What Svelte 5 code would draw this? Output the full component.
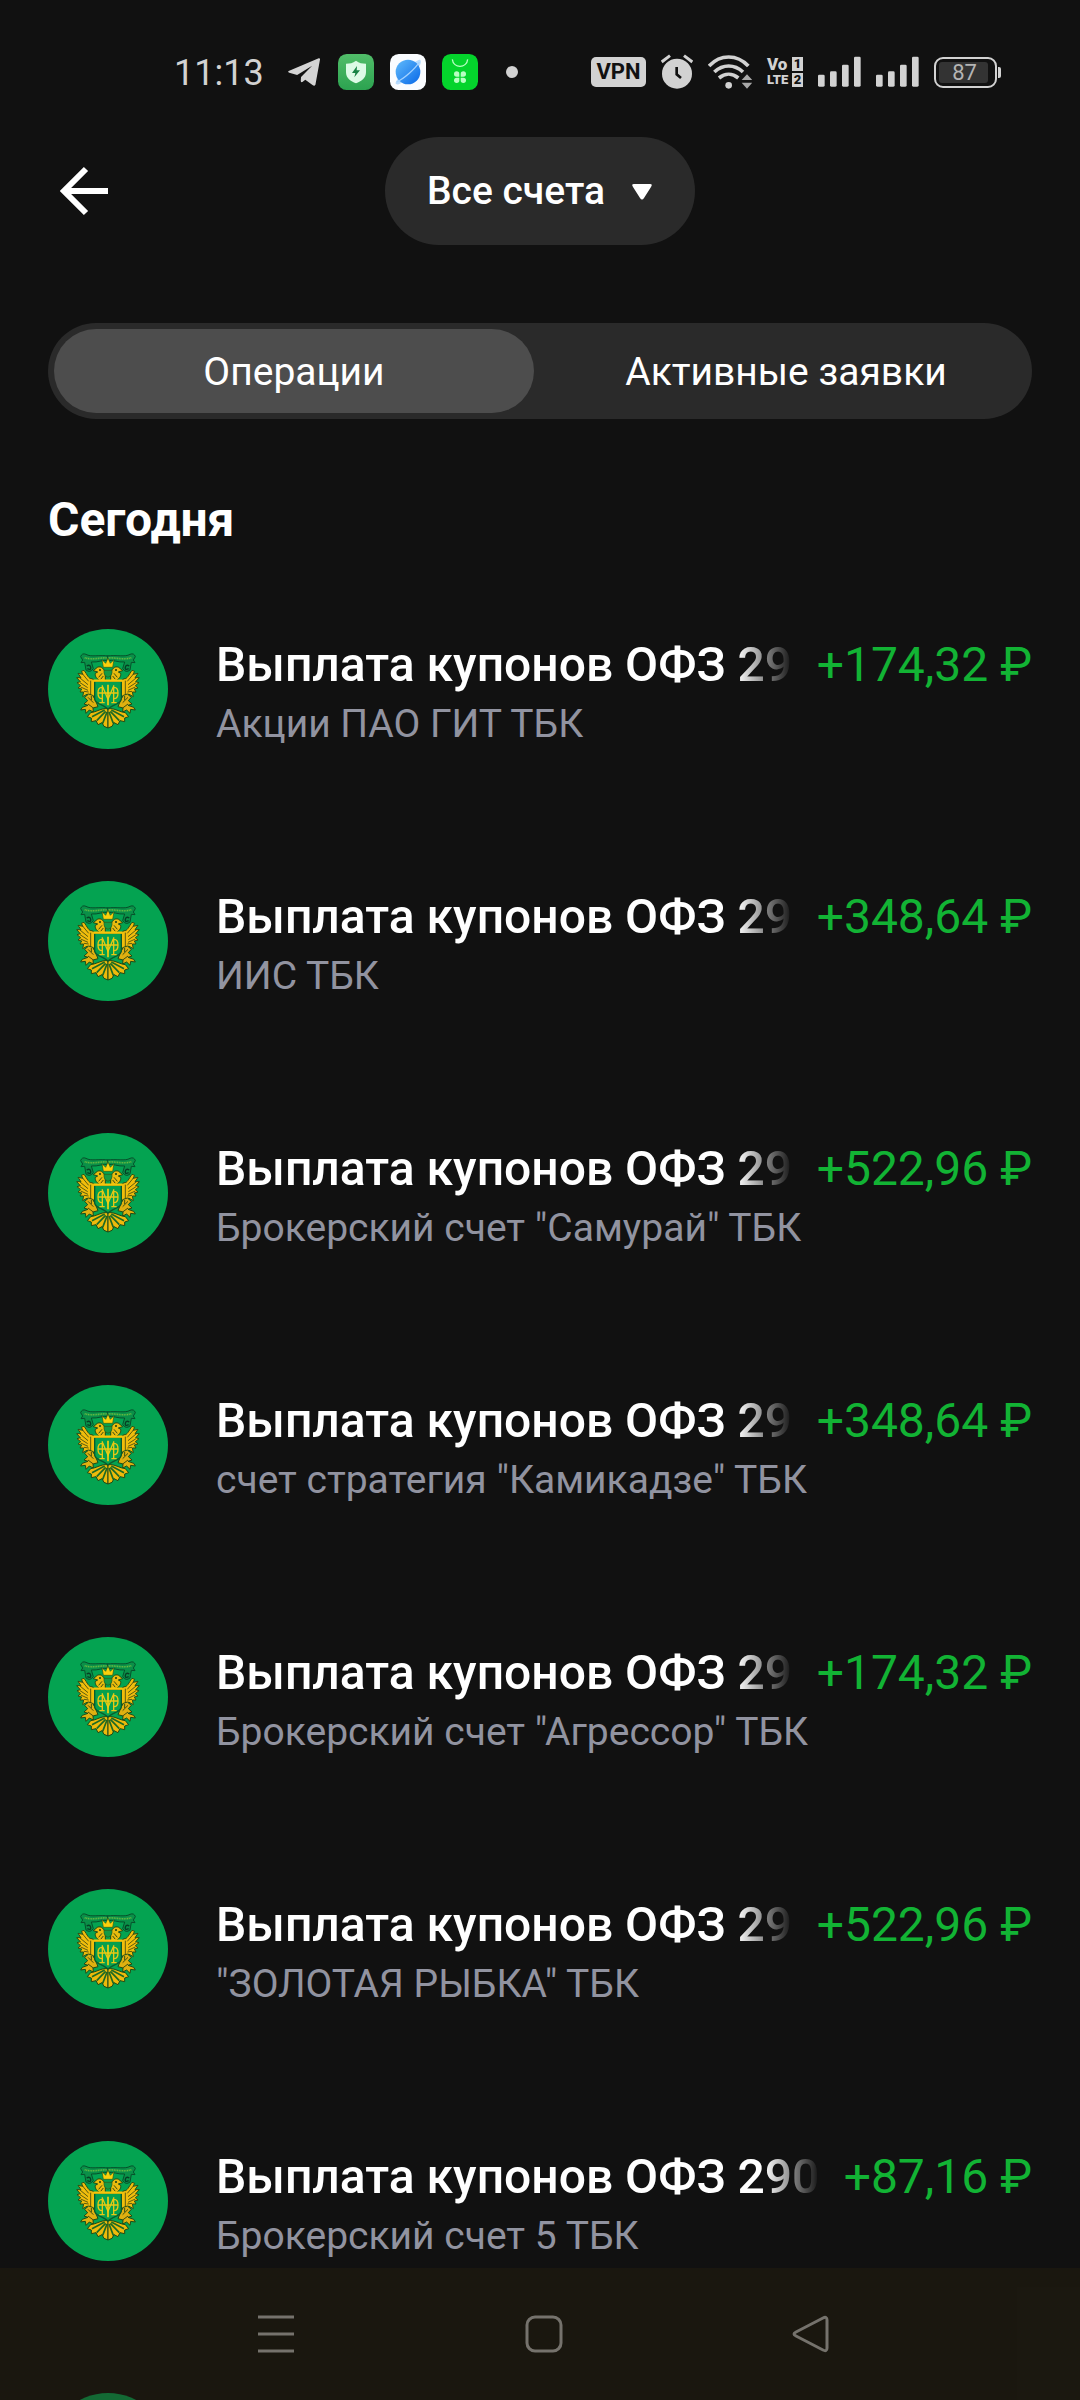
<script>
  const operations = [
    { id: 1, title: 'Выплата купонов ОФЗ 29', account: 'Акции ПАО ГИТ ТБК', amount: '+174,32 ₽' },
    { id: 2, title: 'Выплата купонов ОФЗ 29', account: 'ИИС ТБК', amount: '+348,64 ₽' },
    { id: 3, title: 'Выплата купонов ОФЗ 29', account: 'Брокерский счет "Самурай" ТБК', amount: '+522,96 ₽' },
    { id: 4, title: 'Выплата купонов ОФЗ 29', account: 'счет стратегия "Камикадзе" ТБК', amount: '+348,64 ₽' },
    { id: 5, title: 'Выплата купонов ОФЗ 29', account: 'Брокерский счет "Агрессор" ТБК', amount: '+174,32 ₽' },
    { id: 6, title: 'Выплата купонов ОФЗ 29', account: '"ЗОЛОТАЯ РЫБКА" ТБК', amount: '+522,96 ₽' },
    { id: 7, title: 'Выплата купонов ОФЗ 290', account: 'Брокерский счет 5 ТБК', amount: '+87,16 ₽' },
    { id: 8 },
  ];
  let tab = $state('ops');
</script>

{#snippet half()}
  <path d="M206 108C180 104 152 112 138 103Q126 98 122 110L128 120 123 128 134 127 138 150Q150 160 160 146L154 126C174 128 190 118 206 122Z" fill="#0a9048" stroke="#06512b" stroke-width="3" />
  <path d="M140 138Q150 132 152 142T142 146" fill="none" stroke="#053f24" stroke-width="4" />
  <path d="M134 113C158 121 180 112 204 114" fill="none" stroke="#6cbc40" stroke-width="5" stroke-dasharray="3 2" />
  <path d="M196 186V162C194 148 184 136 172 142L160 152 173 156 166 160C164 170 172 178 180 182Z" fill="#e9bb0e" stroke="#1d4a16" stroke-width="3" />
  <circle cx="180" cy="150" r="3" fill="#153c12" />
  <path d="M186 160L176 172M190 168L182 178" stroke="#3c4d10" stroke-width="3" />
  <path d="M168 184L156 176C146 178 142 164 132 151L124 154 129 163 114 160 123 173 110 173 121 185 111 188 122 197 114 204 125 207 120 216 131 216 128 230 142 222 148 232 168 226Z" fill="#f0bd0c" stroke="#2d4f14" stroke-width="3" />
  <path d="M126 160L146 184M120 174L144 194M120 188L143 203M122 201L144 211M132 214L146 216M152 182V222" stroke="#5c5c10" stroke-width="3" fill="none" />
  <path d="M166 240L158 226 146 222 134 232 143 242 132 252 144 256 127 262 122 270 136 268 138 280 148 270 160 276 159 264 174 260Z" fill="#dfb010" stroke="#1d4a16" stroke-width="3" />
  <path d="M144 232L160 248M144 252L160 264M154 228V240" stroke="#3c4d10" stroke-width="3" />
  <path d="M202 266C184 264 170 276 152 278L142 290 154 294 154 305 168 302 174 314 186 308 192 319 204 324V266Z" fill="#edba0c" stroke="#1d4a16" stroke-width="3" />
  <path d="M194 270L156 290M197 274L170 302M201 276L188 310" stroke="#1d6a24" stroke-width="5" />
{/snippet}

{#snippet emblem()}
  <svg class="emblem" viewBox="24 27 360 360" aria-hidden="true">
    <circle cx="204" cy="207" r="180" fill="#04a351" />
    <g>{@render half()}</g>
    <g transform="matrix(-1 0 0 1 408 0)">{@render half()}</g>
    <path d="M190 142L186 119 197 130 204 114 211 130 222 119 218 142Z" fill="#fbd00c" stroke="#2c5a18" stroke-width="2" />
    <path d="M192 151H216V158Q216 168 204 172Q192 168 192 158Z" fill="#159a45" stroke="#2c5a18" stroke-width="2" />
    <path d="M164 184H244V236C244 252 218 252 204 267C190 252 164 252 164 236Z" fill="#06a04e" stroke="#0b5a2c" stroke-width="4" />
    <path d="M160 182H248" stroke="#f6c60a" stroke-width="7" />
    <path d="M186 202C170 202 170 236 186 236M222 202C238 202 238 236 222 236M187 196V248M221 196V248M178 248H194M230 248H214M188 200L204 238 220 200M176 219H232" fill="none" stroke="#e8c814" stroke-width="4" />
    <path d="M204 194V256" stroke="#f3d00f" stroke-width="5" />
  </svg>
{/snippet}

<div class="screen">
  <div class="status">
    <div class="left">
      <span class="clock">11:13</span>
      <svg class="plane" width="32" height="30" viewBox="413 57 98 90"><path d="M415 99L507 60Q512 59 511 64L497 141Q494 147 488 142L466 126 457 133Q452 135 452 129L453 117 487 83 441 111 417 104Q411 102 415 99Z" fill="#d4d4d4" /></svg>
      <svg width="36" height="36" viewBox="0 0 108 108">
        <defs><linearGradient id="shield" x2="0" y2="1"><stop stop-color="#51bd69" /><stop offset="1" stop-color="#2ca350" /></linearGradient></defs>
        <rect width="108" height="108" rx="26" fill="url(#shield)" />
        <path d="M54 20C64 27 72 29 84 29V55C84 73 70 82 54 88C38 82 24 73 24 55V29C36 29 44 27 54 20Z" fill="#dcfbe6" />
        <path d="M57 36L42 57H52L49 70 66 49H56Z" fill="#168344" />
      </svg>
      <svg width="36" height="36" viewBox="0 0 108 108">
        <defs><linearGradient id="planet" x2="1" y2="1"><stop stop-color="#61bbfb" /><stop offset="1" stop-color="#0868e8" /></linearGradient></defs>
        <rect width="108" height="108" rx="26" fill="#fafcff" />
        <path d="M18 90C8 80 84 8 91 18C98 28 82 46 64 62S28 96 18 90Z" fill="#b9dcfd" />
        <circle cx="54" cy="54" r="37" fill="url(#planet)" />
        <path d="M20 84C42 74 76 44 88 24" fill="none" stroke="#a3d2ff" stroke-width="4" />
      </svg>
      <svg width="36" height="36" viewBox="0 0 108 108">
        <rect width="108" height="108" rx="26" fill="#04d42c" />
        <path d="M31 16C34 44 74 44 77 16" fill="none" stroke="#b8ffc2" stroke-width="4" />
        <g fill="#b8ffc2"><path d="M52 68V60a8 8 0 1 0-8 8Z" /><path d="M56 68V60a8 8 0 1 1 8 8Z" /><path d="M52 71V79a8 8 0 1 1-8-8Z" /><path d="M56 71V79a8 8 0 1 0 8-8Z" /></g>
      </svg>
      <span class="dot"></span>
    </div>
    <div class="right">
      <span class="vpn">VPN</span>
      <svg width="32" height="36" viewBox="273 43 96 108">
        <circle cx="321" cy="102" r="45" fill="#d2d2d2" />
        <path d="M275 67L300 48M367 67L342 48" stroke="#d2d2d2" stroke-width="9" />
        <path d="M320 82V104L333 115" fill="none" stroke="#111" stroke-width="8" />
      </svg>
      <svg width="44" height="36" viewBox="417 40 132 108">
        <g fill="none" stroke="#d2d2d2" stroke-width="11"><path d="M420 76C454 40 504 40 538 76" /><path d="M436 94C462 70 496 70 522 94" /><path d="M450 112C468 97 490 97 508 112" /></g>
        <circle cx="479" cy="134" r="10" fill="#d2d2d2" />
        <path d="M518 118L534 101 550 118ZM518 126L534 144 550 126Z" fill="#a8a8a8" />
      </svg>
      <span class="volte"><b class="vo">Vo</b><i>1</i><b>LTE</b><i>2</i></span>
      {#each [1, 2] as sim (sim)}
        <svg width="43" height="32" viewBox="2 0 129 96"><g fill="#d2d2d2"><rect x="2" y="56" width="20" height="36" rx="4" /><rect x="38" y="46" width="20" height="46" rx="4" /><rect x="74" y="26" width="20" height="66" rx="4" /><rect x="110" y="2" width="20" height="90" rx="4" /></g></svg>
      {/each}
      <span class="battery"><span class="charge">87</span></span>
    </div>
  </div>

  <header>
    <button class="back" aria-label="Назад">
      <svg width="50" height="50" viewBox="0 0 50 50"><path d="M50 25H6M28 3L6 25 28 47" fill="none" stroke="#fff" stroke-width="6" /></svg>
    </button>
    <button class="accounts">
      Все счета
      <svg width="20" height="18" viewBox="0 0 20 18"><path d="M2 2H18Q21 2 19 5L12 16Q10 19 8 16L1 5Q-1 2 2 2Z" fill="#fff" /></svg>
    </button>
  </header>

  <div class="tabs" role="tablist">
    <button role="tab" aria-selected={tab === 'ops'} class:active={tab === 'ops'} onclick={() => (tab = 'ops')}>Операции</button>
    <button role="tab" aria-selected={tab === 'orders'} class:active={tab === 'orders'} onclick={() => (tab = 'orders')}>Активные заявки</button>
  </div>

  <h2>Сегодня</h2>

  <ul>
    {#each operations as op (op.id)}
      <li>
        {@render emblem()}
        {#if op.title}
          <div class="info">
            <div class="line">
              <span class="title">{op.title}</span>
              <span class="amount">{op.amount}</span>
            </div>
            <div class="account">{op.account}</div>
          </div>
        {/if}
      </li>
    {/each}
  </ul>

  <nav>
    <button aria-label="Недавние"><svg width="38" height="38" viewBox="0 0 38 38"><path d="M1 2H37M1 19H37M1 36H37" stroke="#75726c" stroke-width="3" /></svg></button>
    <button aria-label="Домой"><svg width="38" height="38" viewBox="0 0 38 38"><rect x="2" y="2" width="34" height="34" rx="8" fill="none" stroke="#75726c" stroke-width="3" /></svg></button>
    <button aria-label="Назад"><svg width="38" height="38" viewBox="0 0 38 38"><path d="M31 3Q35 1 35 5V33Q35 37 31 35L4 21Q0 19 4 17Z" fill="none" stroke="#75726c" stroke-width="3" /></svg></button>
  </nav>
</div>

<style>
  :global(body) {
    margin: 0;
    background: #111;
  }
  .screen {
    position: relative;
    box-sizing: border-box;
    height: 100vh;
    overflow: hidden;
    display: flex;
    flex-direction: column;
    background: #111;
    color: #fff;
    font-family: Roboto, "Liberation Sans", sans-serif;
  }
  .screen > * {
    flex-shrink: 0;
  }
  svg {
    display: block;
    flex: none;
  }
  button {
    border: 0;
    padding: 0;
    background: none;
    color: inherit;
    font: inherit;
  }
  .status {
    display: flex;
    justify-content: space-between;
    align-items: center;
    height: 72px;
    padding: 36px 83px 0 174px;
    color: #d2d2d2;
  }
  .left,
  .right {
    display: flex;
    align-items: center;
    gap: 16px;
  }
  .right {
    gap: 15px;
  }
  .clock {
    font-size: 36px;
    line-height: 40px;
    margin-right: 8px;
    padding-top: 2px;
  }
  .plane {
    margin-right: 2px;
  }
  .dot {
    width: 12px;
    height: 12px;
    margin-left: 12px;
    border-radius: 50%;
    background: #d2d2d2;
  }
  .vpn {
    width: 55px;
    border-radius: 5px;
    background: #d2d2d2;
    color: #111;
    font-size: 22px;
    font-weight: 700;
    line-height: 30px;
    text-align: center;
  }
  .volte {
    display: grid;
    grid-template-columns: 24px 11px;
    gap: 2px 1px;
    line-height: 14px;
  }
  .volte b {
    font-size: 13px;
    font-weight: 900;
  }
  .volte .vo {
    font-size: 17px;
  }
  .volte i {
    background: #d2d2d2;
    color: #111;
    font-size: 13px;
    font-style: normal;
    font-weight: 900;
    text-align: center;
  }
  .battery {
    position: relative;
    box-sizing: border-box;
    width: 63px;
    height: 31px;
    padding: 3px;
    border: 2px solid #d2d2d2;
    border-radius: 9px;
  }
  .battery::after {
    content: "";
    position: absolute;
    right: -6px;
    top: 8px;
    width: 3px;
    height: 11px;
    border-radius: 0 2px 2px 0;
    background: #d2d2d2;
  }
  .charge {
    display: block;
    width: 47px;
    padding-left: 2px;
    border-radius: 3px;
    background: #333;
    color: #b4b4b4;
    font-size: 22px;
    line-height: 21px;
    text-align: center;
  }
  header {
    display: grid;
    grid-template-columns: 1fr auto 1fr;
    align-items: center;
    padding: 29px 48px 0;
  }
  .back {
    justify-self: start;
    padding-left: 10px;
  }
  .accounts {
    display: flex;
    align-items: center;
    gap: 27px;
    height: 108px;
    padding: 0 43px 0 42px;
    border-radius: 54px;
    background: #2a2a2a;
    font-size: 39px;
    font-weight: 500;
  }
  .tabs {
    display: grid;
    grid-template-columns: 1fr 1fr;
    gap: 12px;
    margin: 78px 48px 0;
    padding: 6px;
    border-radius: 48px;
    background: #2a2a2a;
  }
  .tabs button {
    height: 84px;
    padding-top: 2px;
    border-radius: 42px;
    font-size: 39px;
  }
  .tabs .active {
    background: #4d4d4d;
  }
  h2 {
    margin: 73px 48px 0;
    font-size: 48px;
    font-weight: 700;
    line-height: 56px;
  }
  ul {
    display: flex;
    flex-direction: column;
    gap: 132px;
    margin: 81px 0 0;
    padding: 0 48px;
    list-style: none;
  }
  li {
    display: flex;
    gap: 48px;
    height: 120px;
  }
  .emblem {
    width: 120px;
    height: 120px;
  }
  .info {
    flex: 1;
    min-width: 0;
    padding-top: 8px;
  }
  .line {
    display: flex;
    gap: 24px;
    font-size: 48px;
    line-height: 56px;
    white-space: nowrap;
  }
  .title {
    flex: 1;
    min-width: 0;
    overflow: hidden;
    font-weight: 500;
    mask-image: linear-gradient(to left, transparent, #000 56px);
  }
  .amount {
    color: #12b334;
  }
  .account {
    margin-top: 7px;
    color: #9193a0;
    font-size: 39px;
    line-height: 48px;
  }
  nav {
    position: absolute;
    inset: auto 0 0;
    display: flex;
    justify-content: space-between;
    align-items: center;
    height: 132px;
    padding: 0 250px 0 257px;
    background: rgba(40, 33, 15, 0.43);
  }
</style>
